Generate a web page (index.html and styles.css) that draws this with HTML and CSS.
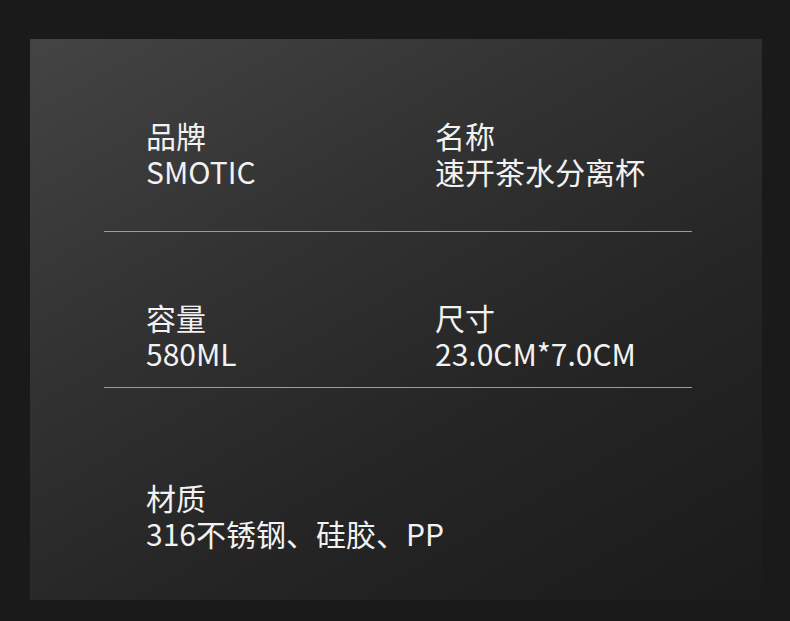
FILE: index.html
```html
<!DOCTYPE html>
<html lang="zh-CN">
<head>
  <meta charset="UTF-8" />
  <meta name="viewport" content="width=device-width, initial-scale=1.0"/>
  <title>产品参数</title>
  <link rel="stylesheet" href="styles.css">
</head>
<body>
  <div class="panel">
    <div class="row row-first">
      <div class="item">
        <div class="label">品牌</div>
        <div class="value">SMOTIC</div>
      </div>
      <div class="item">
        <div class="label">名称</div>
        <div class="value">速开茶水分离杯</div>
      </div>
    </div>
    <div class="divider"></div>
    <div class="row row-second">
      <div class="item">
        <div class="label">容量</div>
        <div class="value">580ML</div>
      </div>
      <div class="item">
        <div class="label">尺寸</div>
        <div class="value">23.0CM*7.0CM</div>
      </div>
    </div>
    <div class="divider"></div>
    <div class="row row-third">
      <div class="item">
        <div class="label">材质</div>
        <div class="value">316不锈钢、硅胶、PP</div>
      </div>
    </div>
  </div>
</body>
</html>
```

FILE: styles.css
```css
body {
  margin: 0;
  background-color: #1a1a1a;
  font-family: "Noto Sans CJK SC", "Noto Sans", sans-serif;
  color: #f2f2f2;
}
.panel {
  width: 732px;
  height: 561px;
  margin: 39px 0 0 30px;
  padding-top: 78px;
  box-sizing: border-box;
  background: linear-gradient(150deg, #444 0%, #323232 35%, #252525 65%, #1b1b1b 100%);
}
.row {
  display: flex;
  padding-left: 116px;
}
.item {
  width: 289px;
}
.label,
.value {
  font-size: 30px;
  line-height: 36px;
  white-space: nowrap;
}
.row-second {
  margin-top: 67px;
}
.row-third {
  margin-top: 91px;
}
.divider {
  width: 588px;
  height: 1px;
  margin: 42px 0 0 74px;
  background-color: #9a9a9a;
}
.row-second + .divider {
  margin-top: 16px;
}
```
